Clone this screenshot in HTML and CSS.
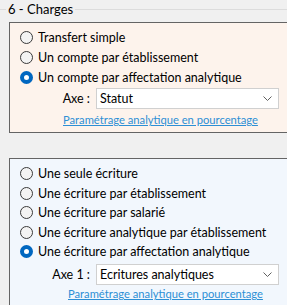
FILE: index.html
```html
<!DOCTYPE html>
<html lang="fr">
<head>
<meta charset="utf-8"/>
<meta content="width=device-width, initial-scale=1.0" name="viewport"/>
<title>Charges</title>
<link rel="stylesheet" href="styles.css">
</head>
<body>
<div class="group">
  <div class="group-title"><span class="line short"></span><span class="title">6 - Charges</span><span class="line"></span></div>

  <div class="panel panel-peach">
    <label class="radio"><span class="dot"></span>Transfert simple</label>
    <label class="radio"><span class="dot"></span>Un compte par établissement</label>
    <label class="radio"><span class="dot checked"></span>Un compte par affectation analytique</label>
    <div class="axe-row">
      <span class="axe-label">Axe :</span>
      <div class="select">Statut<svg class="chev" width="9" height="5" viewBox="0 0 9 5"><path d="M0.5 0.5 L4.5 4.5 L8.5 0.5" fill="none" stroke="#606060" stroke-width="1"/></svg></div>
    </div>
    <a class="link link-1" href="#">Paramétrage analytique en pourcentage</a>
  </div>

  <div class="panel panel-blue">
    <label class="radio tight"><span class="dot"></span>Une seule écriture</label>
    <label class="radio tight"><span class="dot"></span>Une écriture par établissement</label>
    <label class="radio tight"><span class="dot"></span>Une écriture par salarié</label>
    <label class="radio tight"><span class="dot"></span>Une écriture analytique par établissement</label>
    <label class="radio tight"><span class="dot checked"></span>Une écriture par affectation analytique</label>
    <div class="axe-row axe-row-2">
      <span class="axe-label">Axe 1 :</span>
      <div class="select">Ecritures analytiques<svg class="chev" width="9" height="5" viewBox="0 0 9 5"><path d="M0.5 0.5 L4.5 4.5 L8.5 0.5" fill="none" stroke="#606060" stroke-width="1"/></svg></div>
    </div>
    <a class="link link-2" href="#">Paramétrage analytique en pourcentage</a>
  </div>
</div>
</body>
</html>
```

FILE: styles.css
```css
body {
  margin: 0;
  background: #f0f0f0;
  font-family: Lato, "Noto Sans", sans-serif;
  font-size: 12.5px;
  color: #000;
  overflow: hidden;
  height: 305px;
}
.group-title {
  display: flex;
  align-items: center;
  height: 18px;
  margin-bottom: 4px;
}
.line {
  flex: 1;
  height: 1px;
  background: #dcdcdc;
}
.line.short { flex: 0 0 6px; }
.title {
  padding: 0 2px;
  line-height: 18px;
  font-size: 13px;
}
.panel {
  margin-left: 9px;
  border: 1px solid #646464;
  border-right: 0;
}
.panel-peach {
  background: #fdf3ec;
  padding: 4px 0 1px 10px;
  height: 104px;
  margin-bottom: 25px;
}
.panel-blue {
  background: #f2f7fd;
  padding: 5px 0 0 10px;
  height: 143px;
  border-bottom: 0;
}
.radio {
  display: flex;
  align-items: center;
  height: 20px;
  gap: 5px;
}
.radio.tight { height: 19.5px; }
.dot {
  box-sizing: border-box;
  width: 13px;
  height: 13px;
  border-radius: 50%;
  border: 1px solid #3a3a3a;
  background: #f3f3f3;
  flex: 0 0 13px;
}
.dot.checked {
  border: 4px solid #0067c0;
  background: #fff;
}
.axe-row {
  display: flex;
  align-items: center;
  margin-top: 1px;
}
.axe-row-2 { margin-top: 2.5px; }
.axe-label {
  width: 70px;
  text-align: right;
  margin-right: 6px;
}
.select {
  box-sizing: border-box;
  width: 183px;
  height: 21px;
  border: 1px solid #d0d0d0;
  background: #fff;
  display: flex;
  align-items: center;
  justify-content: space-between;
  padding: 0 6px 0 3px;
}
.link {
  display: block;
  width: max-content;
  color: #2d8fd5;
  text-decoration: underline;
  margin-top: 2px;
  line-height: 18px;
  font-size: 11.2px;
}
.link-1 { margin-left: 43px; }
.link-2 { margin-left: 48px; margin-top: 0; }
```
